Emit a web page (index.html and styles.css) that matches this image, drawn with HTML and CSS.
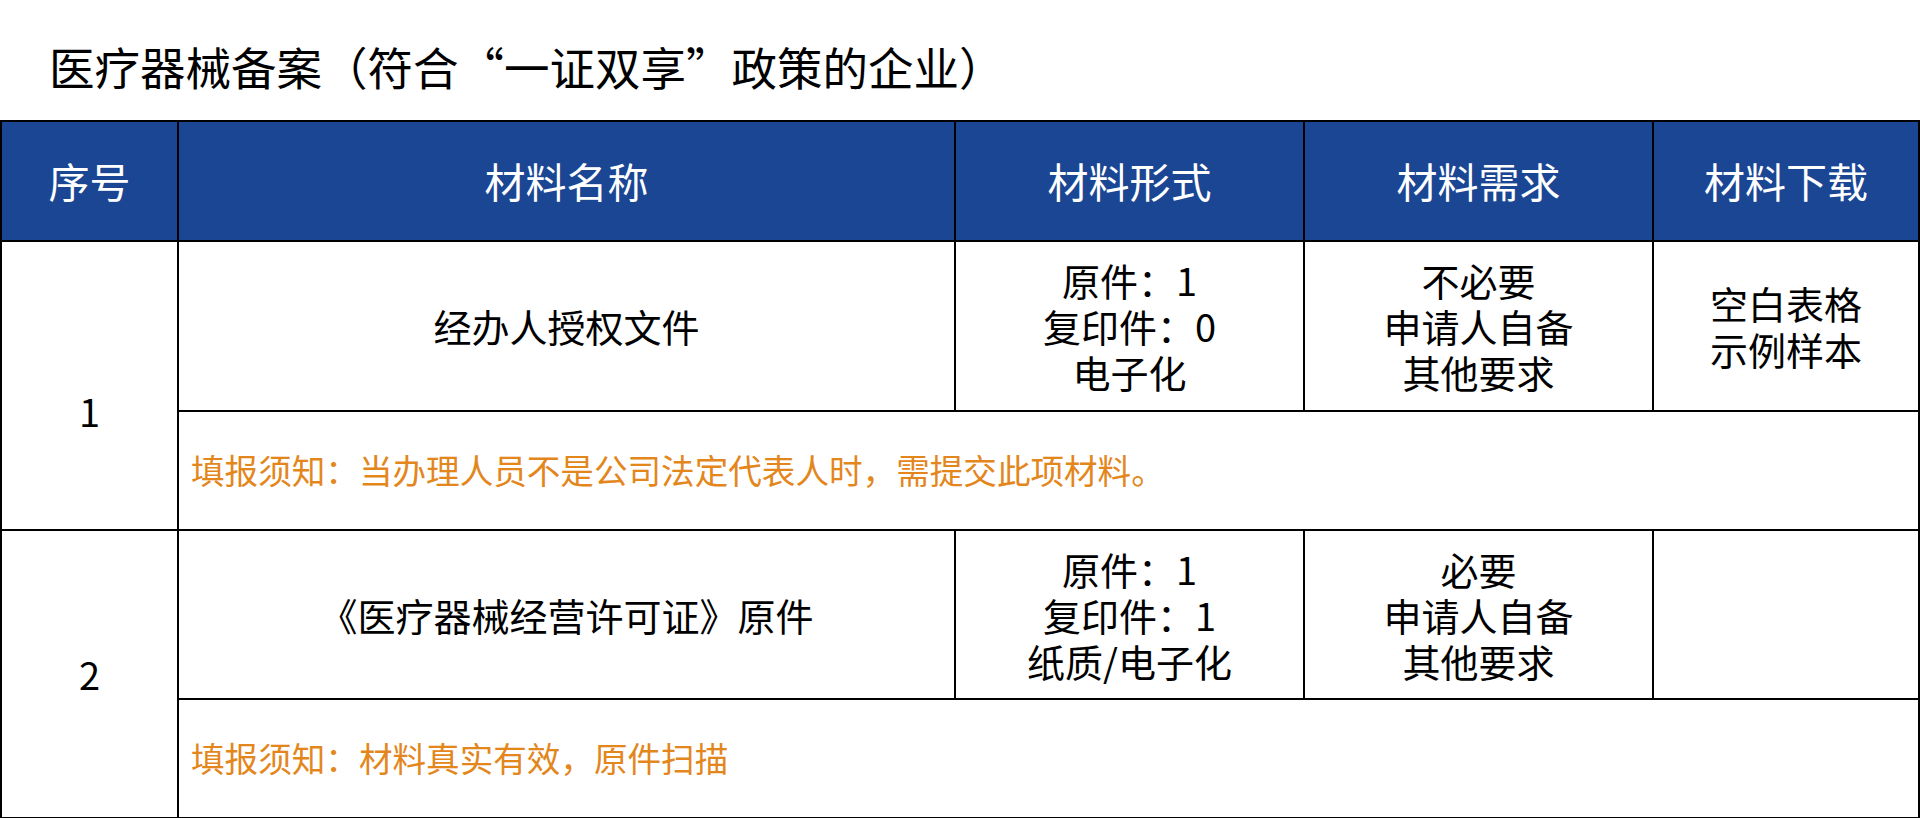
FILE: index.html
```html
<!DOCTYPE html>
<html lang="zh-CN">
<head>
<meta charset="utf-8">
<title>医疗器械备案</title>
<link rel="stylesheet" href="styles.css">
</head>
<body>
<div class="page">
  <h1 class="title">医疗器械备案（符合“一证双享”政策的企业）</h1>
  <table class="materials">
    <colgroup>
      <col class="c-no">
      <col class="c-name">
      <col class="c-form">
      <col class="c-need">
      <col class="c-down">
    </colgroup>
    <thead>
      <tr class="head-row">
        <th>序号</th>
        <th>材料名称</th>
        <th>材料形式</th>
        <th>材料需求</th>
        <th>材料下载</th>
      </tr>
    </thead>
    <tbody>
      <tr class="item-row r1">
        <td class="num num-low" rowspan="2">1</td>
        <td class="name">经办人授权文件</td>
        <td class="multi">原件：1<br>复印件：0<br>电子化</td>
        <td class="multi">不必要<br>申请人自备<br>其他要求</td>
        <td class="multi">空白表格<br>示例样本</td>
      </tr>
      <tr class="note-row n1">
        <td class="note" colspan="4">填报须知：当办理人员不是公司法定代表人时，需提交此项材料。</td>
      </tr>
      <tr class="item-row r2">
        <td class="num" rowspan="2">2</td>
        <td class="name">《医疗器械经营许可证》原件</td>
        <td class="multi">原件：1<br>复印件：1<br>纸质/电子化</td>
        <td class="multi">必要<br>申请人自备<br>其他要求</td>
        <td class="multi"></td>
      </tr>
      <tr class="note-row n2">
        <td class="note" colspan="4">填报须知：材料真实有效，原件扫描</td>
      </tr>
    </tbody>
  </table>
</div>
</body>
</html>
```

FILE: styles.css
```css
html, body {
  margin: 0;
  padding: 0;
  background: #ffffff;
}

body {
  font-family: "Noto Sans CJK SC", "Noto Sans", sans-serif;
  color: #000000;
}

.page {
  width: 1920px;
  height: 818px;
  overflow: hidden;
}

.title {
  margin: 0;
  height: 106px;
  padding-top: 14px;
  padding-left: 49px;
  display: flex;
  align-items: center;
  font-size: 45.5px;
  font-weight: normal;
  line-height: 1;
  letter-spacing: 0;
}

.materials {
  border-collapse: collapse;
  table-layout: fixed;
  width: 1918px;
}

.c-no { width: 177px; }
.c-name { width: 777px; }
.c-form { width: 349px; }
.c-need { width: 349px; }
.c-down { width: 266px; }

.materials th,
.materials td {
  border: 2px solid #000000;
  padding: 0;
  text-align: center;
  vertical-align: middle;
}

.head-row th {
  background: #1a4694;
  color: #ffffff;
  font-size: 41px;
  font-weight: normal;
  height: 118px;
  line-height: 1.2;
}

.r1 td { height: 168px; }
.n1 td { height: 117px; }
.r2 td { height: 167px; }
.n2 td { height: 117px; }

.num {
  font-size: 38px;
  line-height: 1.2;
}

.materials td.num-low {
  padding-top: 50px;
}

.name {
  font-size: 38px;
  line-height: 1.2;
}

.multi {
  font-size: 38px;
  line-height: 46px;
}

.materials td.note {
  text-align: left;
  padding-left: 12px;
  font-size: 33.6px;
  line-height: 1.2;
  color: #e3861c;
}
```
